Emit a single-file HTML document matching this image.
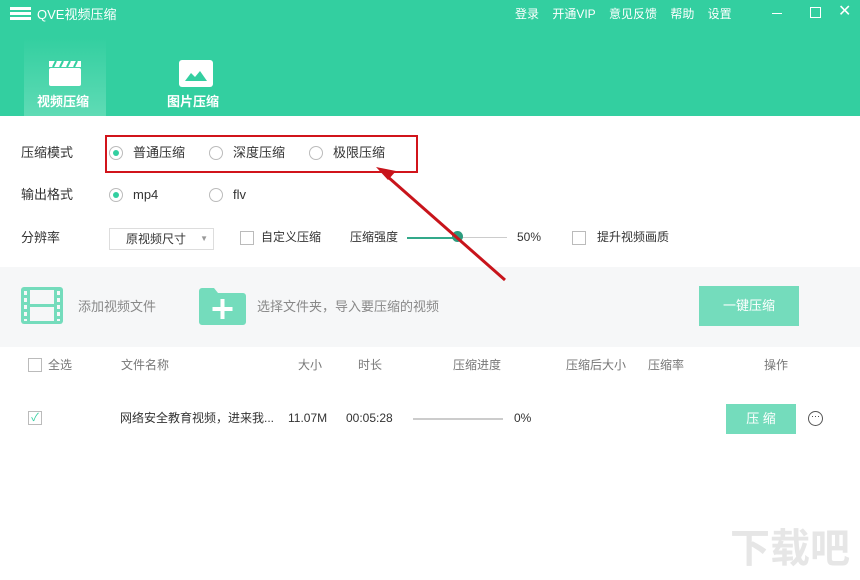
<!DOCTYPE html><html><head><meta charset="utf-8"><style>
body{margin:0;width:860px;height:580px;overflow:hidden;background:#fff;font-family:"Liberation Sans","Noto Sans CJK SC",sans-serif;position:relative;color:#333;line-height:1.05}
.a{position:absolute;white-space:nowrap}
.hd{position:absolute;left:0;top:0;width:860px;height:116px;background:#33cfa0}
.radio{position:absolute;width:12px;height:12px;border:1px solid #bbb;border-radius:50%;background:#fff}
.radio.on::after{content:"";position:absolute;left:3px;top:3px;width:6px;height:6px;border-radius:50%;background:#33cfa0}
.cb{position:absolute;width:12px;height:12px;border:1px solid #bbb;background:#fff}
.f13{font-size:13px}.f12{font-size:12px;color:#777}
</style></head><body>
<div class="hd"></div>
<div class="a" style="left:10px;top:7px;width:21px;height:3px;background:#fff"></div>
<div class="a" style="left:10px;top:12px;width:21px;height:3px;background:#fff"></div>
<div class="a" style="left:10px;top:17px;width:21px;height:3px;background:#fff"></div>
<div class="a" style="left:37px;top:8px;color:#fff;font-size:13px">QVE视频压缩</div>
<div class="a" style="left:515px;top:8px;color:#fff;font-size:12px">登录&nbsp;&nbsp;&nbsp;&nbsp;开通VIP&nbsp;&nbsp;&nbsp;&nbsp;意见反馈&nbsp;&nbsp;&nbsp;&nbsp;帮助&nbsp;&nbsp;&nbsp;&nbsp;设置</div>
<div class="a" style="left:772px;top:13px;width:10px;height:1px;background:#fff"></div>
<div class="a" style="left:810px;top:7px;width:9px;height:9px;border:1px solid #fff"></div>
<div class="a" style="left:838px;top:4px;color:#fff;font-size:16px">✕</div>
<div class="a" style="left:24px;top:38px;width:82px;height:78px;background:linear-gradient(#33cfa0,#5fdbb5)"></div>
<svg class="a" style="left:48px;top:59px" width="34" height="28"><rect x="1" y="9" width="32" height="18" rx="2" fill="#fff"/><path d="M1 2h32v6H1z" fill="#fff"/><path d="M8 2l-3 6M15 2l-3 6M22 2l-3 6M29 2l-3 6" stroke="#33cfa0" stroke-width="2"/></svg>
<div class="a" style="left:37px;top:95px;color:#fff;font-size:13px;font-weight:bold">视频压缩</div>
<svg class="a" style="left:179px;top:60px" width="34" height="27"><rect width="34" height="27" rx="3" fill="#fff"/><path d="M6 21l6-8 4 4 5-6 7 10z" fill="#33cfa0"/></svg>
<div class="a" style="left:167px;top:95px;color:#fff;font-size:13px;font-weight:bold">图片压缩</div>
<div class="a f13" style="left:21px;top:146px">压缩模式</div>
<div class="radio on" style="left:109px;top:146px"></div><div class="a f13" style="left:133px;top:146px">普通压缩</div>
<div class="radio" style="left:209px;top:146px"></div><div class="a f13" style="left:233px;top:146px">深度压缩</div>
<div class="radio" style="left:309px;top:146px"></div><div class="a f13" style="left:333px;top:146px">极限压缩</div>
<div class="a" style="left:105px;top:135px;width:309px;height:34px;border:2px solid #d1141b"></div>
<div class="a f13" style="left:21px;top:188px">输出格式</div>
<div class="radio on" style="left:109px;top:188px"></div><div class="a f13" style="left:133px;top:188px">mp4</div>
<div class="radio" style="left:209px;top:188px"></div><div class="a f13" style="left:233px;top:188px">flv</div>
<div class="a f13" style="left:21px;top:231px">分辨率</div>
<div class="a" style="left:109px;top:228px;width:103px;height:20px;border:1px solid #ddd;font-size:12px;line-height:20px"><span style="margin-left:16px">原视频尺寸</span><span style="position:absolute;right:5px;color:#999;font-size:8px">▼</span></div>
<div class="cb" style="left:240px;top:231px"></div><div class="a" style="left:261px;top:231px;font-size:12px">自定义压缩</div>
<div class="a" style="left:350px;top:231px;font-size:12px">压缩强度</div>
<div class="a" style="left:407px;top:237px;width:50px;height:2px;background:#33a98a"></div>
<div class="a" style="left:457px;top:237px;width:50px;height:1px;background:#ccc"></div>
<div class="a" style="left:452px;top:231px;width:11px;height:11px;border-radius:50%;background:#2c9c7e"></div>
<div class="a" style="left:517px;top:231px;font-size:12px">50%</div>
<div class="cb" style="left:572px;top:231px"></div><div class="a" style="left:597px;top:231px;font-size:12px">提升视频画质</div>
<div class="a" style="left:0;top:267px;width:860px;height:80px;background:#f6f7f8"></div>
<div class="a" style="left:21px;top:287px;width:42px;height:37px;background:#74dcbc;border-radius:3px"></div>
<div class="a" style="left:30px;top:290px;width:24px;height:14px;background:#f6f7f8"></div>
<div class="a" style="left:30px;top:307px;width:24px;height:14px;background:#f6f7f8"></div>
<div class="a" style="left:24px;top:291px;width:3px;height:30px;background:repeating-linear-gradient(#f6f7f8 0 4px,transparent 4px 7px)"></div>
<div class="a" style="left:57px;top:291px;width:3px;height:30px;background:repeating-linear-gradient(#f6f7f8 0 4px,transparent 4px 7px)"></div>
<div class="a" style="left:78px;top:300px;font-size:13px;color:#888">添加视频文件</div>
<svg class="a" style="left:199px;top:288px" width="47" height="37"><path d="M0 3a3 3 0 0 1 3-3h12l4 5h25a3 3 0 0 1 3 3v26a3 3 0 0 1-3 3H3a3 3 0 0 1-3-3z" fill="#74dcbc"/><path d="M23.5 11v20M13.5 21h20" stroke="#fff" stroke-width="4"/></svg>
<div class="a" style="left:257px;top:300px;font-size:13px;color:#888">选择文件夹，导入要压缩的视频</div>
<div class="a" style="left:699px;top:286px;width:100px;height:40px;background:#74dcbc;color:#fff;font-size:13px;line-height:40px;text-align:center">一键压缩</div>
<div class="cb" style="left:28px;top:358px"></div>
<div class="a f12" style="left:48px;top:359px">全选</div>
<div class="a f12" style="left:121px;top:359px">文件名称</div>
<div class="a f12" style="left:298px;top:359px">大小</div>
<div class="a f12" style="left:358px;top:359px">时长</div>
<div class="a f12" style="left:453px;top:359px">压缩进度</div>
<div class="a f12" style="left:566px;top:359px">压缩后大小</div>
<div class="a f12" style="left:648px;top:359px">压缩率</div>
<div class="a f12" style="left:764px;top:359px">操作</div>
<div class="cb" style="left:28px;top:411px;color:#33cfa0;font-size:11px;line-height:12px;text-align:center">✓</div>
<div class="a" style="left:120px;top:412px;font-size:12px">网络安全教育视频，进来我...</div>
<div class="a" style="left:288px;top:412px;font-size:12px">11.07M</div>
<div class="a" style="left:346px;top:412px;font-size:12px">00:05:28</div>
<div class="a" style="left:413px;top:418px;width:90px;height:2px;background:#ccc"></div>
<div class="a" style="left:514px;top:412px;font-size:12px">0%</div>
<div class="a" style="left:726px;top:404px;width:70px;height:30px;background:#74dcbc;color:#fff;font-size:13px;line-height:30px;text-align:center">压 缩</div>
<div class="a" style="left:808px;top:411px;width:13px;height:13px;border:1px solid #555;border-radius:50%;font-size:9px;line-height:9px;text-align:center">···</div>
<svg class="a" style="left:0;top:0" width="860" height="580"><line x1="505" y1="280" x2="388" y2="177" stroke="#c8141b" stroke-width="3"/><path d="M376 167l20 4-8 9z" fill="#c8141b"/></svg>
<div class="a" style="left:730px;top:528px;font-size:40px;color:#e6e6e6;font-weight:bold">下载吧</div>
</body></html>
